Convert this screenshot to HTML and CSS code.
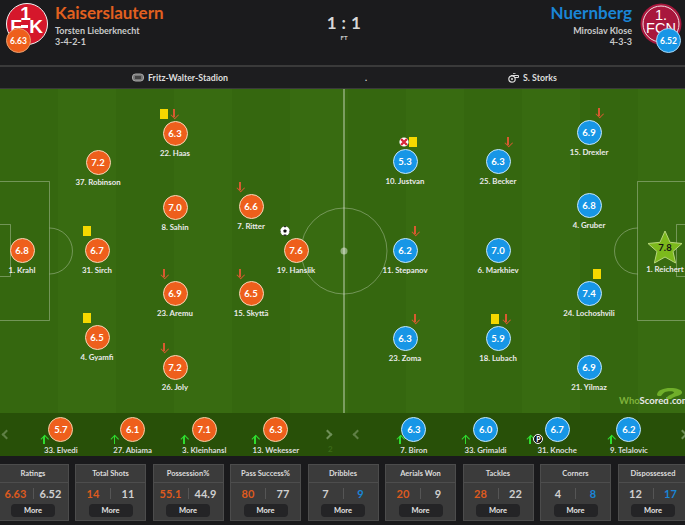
FILE: index.html
```html
<!DOCTYPE html>
<html lang="en">
<head>
<meta charset="utf-8">
<title>Kaiserslautern 1 : 1 Nuernberg</title>
<link rel="stylesheet" href="styles.css">
</head>
<body>
<div class="page">
  <header class="match">
    <div class="team home">
      <div class="crest">
        <svg viewBox="0 0 42 42" width="42" height="42"><circle cx="21" cy="21" r="20.5" fill="#d5172b" stroke="#f3f3f3" stroke-width="1"/><text x="19.5" y="17" class="crest-t big">1</text><text x="10" y="30" class="crest-t big">F</text><text x="30" y="30" class="crest-t big">K</text><rect x="15" y="22" width="7" height="3" fill="#fff"/></svg>
        <span class="team-rating home-bg">6.63</span>
      </div>
      <div class="team-info">
        <div class="team-name home-c">Kaiserslautern</div>
        <div class="team-sub">Torsten Lieberknecht</div>
        <div class="team-sub">3-4-2-1</div>
      </div>
    </div>
    <div class="score"><div class="score-val">1 : 1</div><div class="score-st">FT</div></div>
    <div class="team away">
      <div class="team-info">
        <div class="team-name away-c">Nuernberg</div>
        <div class="team-sub">Miroslav Klose</div>
        <div class="team-sub">4-3-3</div>
      </div>
      <div class="crest">
        <svg viewBox="0 0 42 42" width="42" height="42"><circle cx="21" cy="21" r="20.5" fill="#a8173d"/><circle cx="21" cy="21" r="18" fill="none" stroke="#f1dfe2" stroke-width="1"/><text x="21" y="16.5" class="crest-t mid">1.</text><text x="21" y="30" class="crest-t mid">FCN</text></svg>
        <span class="team-rating away-bg">6.52</span>
      </div>
    </div>
  </header>

  <div class="infobar">
    <div class="info venue">
      <svg width="12" height="9" viewBox="0 0 12 9"><rect x="0.5" y="1" width="11" height="7" rx="3" fill="#777" stroke="#aaa"/><rect x="3" y="3" width="6" height="3" fill="#444"/></svg>
      <span>Fritz-Walter-Stadion</span>
    </div>
    <div class="info dot">.</div>
    <div class="info referee">
      <svg width="11" height="11" viewBox="0 0 11 11"><circle cx="4" cy="7" r="3.2" fill="none" stroke="#ddd" stroke-width="1.2"/><circle cx="4" cy="7" r="1" fill="#ddd"/><path d="M3 3.5H10.5V5.5H6.5" fill="none" stroke="#ddd"/><path d="M5 1.5H7.5" stroke="#aaa"/></svg>
      <span>S. Storks</span>
    </div>
  </div>

  <main class="pitch">
    <svg class="lines" width="685" height="324" viewBox="0 0 685 324">
      <g fill="none" stroke="#fff" stroke-opacity=".3" stroke-width="1">
        <path d="M0 92.5H49.5V231.5H0"/>
        <path d="M0 135.5H10.5V187.5H0"/>
        <path d="M49.5 139A23 23 0 0 1 49.5 185"/>
        <path d="M685 92.5H637.5V231.5H685"/>
        <path d="M685 135.5H676.5V187.5H685"/>
        <path d="M637.5 139A23 23 0 0 0 637.5 185"/>
        <circle cx="344" cy="162" r="43"/>
      </g>
      <path d="M344 0V324" stroke="#fff" stroke-opacity=".45" stroke-width="1.5"/>
      <circle cx="344" cy="162" r="3.5" fill="#fff" fill-opacity=".45"/>
    </svg>

    <div class="player p1"><span class="rate home-bg">6.8</span><span class="pname">1. Krahl</span></div>
    <div class="player p2"><i class="card"></i><span class="rate home-bg">6.7</span><span class="pname">31. Sirch</span></div>
    <div class="player p3"><span class="rate home-bg">7.2</span><span class="pname">37. Robinson</span></div>
    <div class="player p4"><i class="card"></i><span class="rate home-bg">6.5</span><span class="pname">4. Gyamfi</span></div>
    <div class="player p5"><i class="card card-haas"></i><i class="down down-haas"></i><span class="rate home-bg">6.3</span><span class="pname">22. Haas</span></div>
    <div class="player p6"><span class="rate home-bg">7.0</span><span class="pname">8. Sahin</span></div>
    <div class="player p7"><i class="down down-h"></i><span class="rate home-bg">6.9</span><span class="pname">23. Aremu</span></div>
    <div class="player p8"><i class="down down-h"></i><span class="rate home-bg">7.2</span><span class="pname">26. Joly</span></div>
    <div class="player p9"><i class="down down-h"></i><span class="rate home-bg">6.6</span><span class="pname">7. Ritter</span></div>
    <div class="player p10"><i class="down down-h"></i><span class="rate home-bg">6.5</span><span class="pname">15. Skyttä</span></div>
    <div class="player p11">
      <svg class="ball" width="10" height="10" viewBox="0 0 10 10"><circle cx="5" cy="5" r="4.7" fill="#fff"/><path d="M5 3.2L6.8 4.5L6.1 6.6H3.9L3.2 4.5Z" fill="#111"/><path d="M3.2 .6L5 1.4L6.8 .6L5 0ZM.2 4L1.2 6.5L.4 6ZM9.8 4L8.8 6.5L9.6 6ZM3 9.3L4 8.4H6L7 9.3L5 10Z" fill="#111"/></svg>
      <span class="rate home-bg">7.6</span><span class="pname">19. Hanslik</span>
    </div>

    <div class="player q1"><svg class="miss" width="10" height="10" viewBox="0 0 10 10"><circle cx="5" cy="5" r="4.6" fill="#fff"/><path d="M2 2L8 8M8 2L2 8" stroke="#d8283a" stroke-width="2.4"/></svg><i class="card card-r"></i><span class="rate away-bg">5.3</span><span class="pname">10. Justvan</span></div>
    <div class="player q2"><i class="down down-a"></i><span class="rate away-bg">6.3</span><span class="pname">25. Becker</span></div>
    <div class="player q3"><i class="down down-a"></i><span class="rate away-bg">6.9</span><span class="pname">15. Drexler</span></div>
    <div class="player q4"><span class="rate away-bg">6.8</span><span class="pname">4. Gruber</span></div>
    <div class="player q5"><i class="down down-a"></i><span class="rate away-bg">6.2</span><span class="pname">11. Stepanov</span></div>
    <div class="player q6"><span class="rate away-bg">7.0</span><span class="pname">6. Markhiev</span></div>
    <div class="player q7"><i class="card card-r"></i><span class="rate away-bg">7.4</span><span class="pname">24. Lochoshvili</span></div>
    <div class="player q8"><i class="down down-a"></i><span class="rate away-bg">6.3</span><span class="pname">23. Zoma</span></div>
    <div class="player q9"><i class="card card-lub"></i><i class="down down-lub"></i><span class="rate away-bg">5.9</span><span class="pname">18. Lubach</span></div>
    <div class="player q10"><span class="rate away-bg">6.9</span><span class="pname">21. Yilmaz</span></div>
    <div class="player q11">
      <span class="star-wrap">
        <svg width="36" height="34" viewBox="0 0 36 34"><path d="M18 1L23 12.3L35 13.5L26 21.5L28.6 33L18 27L7.4 33L10 21.5L1 13.5L13 12.3Z" fill="#7cb91c" stroke="#b6d67a" stroke-width="1"/></svg>
        <span class="star-val">7.8</span>
      </span>
      <span class="pname">1. Reichert</span>
    </div>

    <div class="logo">
      <svg class="logo-q" width="27" height="11" viewBox="0 0 27 11"><path d="M1 7C1 2 8 0 14 0C21 0 27 2 26 5C25 8 18 8 15 11L10 11C11 7 18 6 18 4.5C18 3 12 3 9 4C7 5 6 7 5 8C3 8 1 8 1 7Z" fill="#6fae2a"/></svg>
      <span class="logo-a">Who</span><span class="logo-b">Scored</span><span class="logo-c">.com</span>
    </div>
  </main>

  <section class="subs">
    <div class="sub-half sub-left">
      <span class="chev chev-off chev-l"></span>
      <div class="sub"><i class="up s1"></i><span class="rate home-bg">5.7</span><span class="pname">33. Elvedi</span></div>
      <div class="sub"><i class="up s2"></i><span class="rate home-bg">6.1</span><span class="pname">27. Abiama</span></div>
      <div class="sub"><i class="up s3"></i><span class="rate home-bg">7.1</span><span class="pname">3. Kleinhansl</span></div>
      <div class="sub"><i class="up s4"></i><span class="rate home-bg">6.3</span><span class="pname">13. Wekesser</span></div>
      <span class="chev chev-on chev-r"></span>
      <span class="chev-n">2</span>
    </div>
    <div class="sub-half sub-right">
      <span class="chev chev-off chev-l"></span>
      <div class="sub"><i class="up s5"></i><span class="rate away-bg">6.3</span><span class="pname">7. Biron</span></div>
      <div class="sub"><i class="up s6"></i><span class="rate away-bg">6.0</span><span class="pname">33. Grimaldi</span></div>
      <div class="sub"><i class="up s7"></i><span class="pen">P</span><span class="rate away-bg">6.7</span><span class="pname">31. Knoche</span></div>
      <div class="sub"><i class="up s8"></i><span class="rate away-bg">6.2</span><span class="pname">9. Telalovic</span></div>
      <span class="chev chev-on chev-r"></span>
    </div>
  </section>

  <section class="stats">
    <div class="stat"><div class="stat-h">Ratings</div><div class="stat-v"><span class="home-c">6.63</span><i></i><span>6.52</span></div><div class="more">More</div></div>
    <div class="stat"><div class="stat-h">Total Shots</div><div class="stat-v"><span class="home-c">14</span><i></i><span>11</span></div><div class="more">More</div></div>
    <div class="stat"><div class="stat-h">Possession%</div><div class="stat-v"><span class="home-c">55.1</span><i></i><span>44.9</span></div><div class="more">More</div></div>
    <div class="stat"><div class="stat-h">Pass Success%</div><div class="stat-v"><span class="home-c">80</span><i></i><span>77</span></div><div class="more">More</div></div>
    <div class="stat"><div class="stat-h">Dribbles</div><div class="stat-v"><span>7</span><i></i><span class="away-c">9</span></div><div class="more">More</div></div>
    <div class="stat"><div class="stat-h">Aerials Won</div><div class="stat-v"><span class="home-c">20</span><i></i><span>9</span></div><div class="more">More</div></div>
    <div class="stat"><div class="stat-h">Tackles</div><div class="stat-v"><span class="home-c">28</span><i></i><span>22</span></div><div class="more">More</div></div>
    <div class="stat"><div class="stat-h">Corners</div><div class="stat-v"><span>4</span><i></i><span class="away-c">8</span></div><div class="more">More</div></div>
    <div class="stat"><div class="stat-h">Dispossessed</div><div class="stat-v"><span>12</span><i></i><span class="away-c">17</span></div><div class="more">More</div></div>
  </section>
</div>
</body>
</html>
```
FILE: styles.css
```css
* { box-sizing: border-box; }
html, body { margin: 0; padding: 0; }
body { background: #1c1c1e; font-family: Lato, "Open Sans", sans-serif; color: #ddd; }
.page { width: 685px; height: 525px; overflow: hidden; display: flex; flex-direction: column; }

.home-c { color: #e2601f; }
.away-c { color: #1a85d6; }
.home-bg { background: #ee5f1c; }
.away-bg { background: #1796e6; }

/* header */
.match { height: 67px; display: grid; grid-template-columns: 304px 80px 301px; background: #1b1b1d; border-bottom: 2px solid #3a3a3a; }
.team { display: flex; gap: 7px; padding-top: 3px; }
.home { padding-left: 6px; }
.away { justify-content: flex-end; padding-right: 3px; gap: 8px; }
.crest { position: relative; width: 42px; height: 42px; }
.crest svg { display: block; }
.crest-t { fill: #fff; font-family: "Liberation Sans", sans-serif; font-weight: 700; text-anchor: middle; }
.crest-t.big { font-size: 19px; }
.crest-t.mid { font-size: 14.5px; font-weight: 400; }
.team-rating { position: absolute; width: 25px; height: 25px; border-radius: 50%; display: flex; align-items: center; justify-content: center; color: #fff; font-size: 8.5px; font-weight: 700; }
.home .team-rating { left: 0; top: 25px; border: 1px solid #e8a070; }
.away .team-rating { left: 16px; top: 25px; border: 1px solid #a6d6f4; }
.team-info { display: flex; flex-direction: column; padding-top: 1px; }
.away .team-info { text-align: right; }
.team-name { font-size: 17px; font-weight: 700; line-height: 18px; height: 21px; }
.team-sub { font-size: 9px; line-height: 11px; color: #c9c9c9; font-weight: 700; }
.score { text-align: center; padding-top: 13px; }
.score-val { font-size: 17px; line-height: 20px; color: #d8d8d8; letter-spacing: .4px; font-weight: 700; }
.score-st { font-size: 6px; line-height: 8px; color: #ccc; margin-top: 1px; font-weight: 700; }

/* info bar */
.infobar { height: 22px; background: #1d1d1f; border-bottom: 1px solid #3a3a3a; display: grid; grid-template-columns: 330px 70px 285px; align-items: center; font-size: 8.8px; font-weight: 700; color: #ddd; }
.info { display: flex; align-items: center; gap: 4px; }
.venue { padding-left: 132px; }
.dot { padding-left: 35px; }
.referee { padding-left: 108px; }

/* pitch */
.pitch { position: relative; height: 324px; background: repeating-linear-gradient(90deg, #35670f 0, #35670f 58px, #386b11 58px, #386b11 116px); }
.lines { position: absolute; left: 0; top: 0; }
.player { position: absolute; width: 80px; margin-left: -40px; display: flex; flex-direction: column; align-items: center; }
.rate { width: 25px; height: 25px; border-radius: 50%; border: 1px solid #f4d9b8; display: flex; align-items: center; justify-content: center; color: #fff; font-size: 9.5px; font-weight: 700; flex: none; }
.away-bg.rate { border-color: #c5e6fa; }
.pname { font-size: 7.8px; font-weight: 700; line-height: 10px; margin-top: 2px; color: #eaeaea; white-space: nowrap; }

.card { position: absolute; width: 8px; height: 10px; background: #f5d800; left: 26px; top: -12px; }
.card-haas { left: 25px; top: -12px; }
.card-r { left: 44px; }
.card-lub { left: 33px; }
.down { position: absolute; top: -12px; width: 1.5px; height: 8px; background: #d85a30; }
.down::after { content: ""; position: absolute; left: -1.5px; bottom: 0; width: 4.5px; height: 4.5px; border-right: 1.5px solid #d85a30; border-bottom: 1.5px solid #d85a30; transform: rotate(45deg); }
.down-h { left: 28px; }
.down-a { left: 49px; }
.down-haas { left: 38px; }
.down-lub { left: 47px; }
.p1 { left: 22px; top: 149px; }
.p2 { left: 97px; top: 149px; }
.p3 { left: 98px; top: 61px; }
.p4 { left: 97px; top: 236px; }
.p5 { left: 175px; top: 32px; }
.p6 { left: 175px; top: 106px; }
.p7 { left: 175px; top: 192px; }
.p8 { left: 175px; top: 266px; }
.p9 { left: 251px; top: 105px; }
.p10 { left: 251px; top: 192px; }
.p11 { left: 296px; top: 149px; }
.q1 { left: 405px; top: 60px; }
.q2 { left: 498px; top: 60px; }
.q3 { left: 589px; top: 31px; }
.q4 { left: 589px; top: 104px; }
.q5 { left: 405px; top: 149px; }
.q6 { left: 498px; top: 149px; }
.q7 { left: 589px; top: 192px; }
.q8 { left: 405px; top: 237px; }
.q9 { left: 498px; top: 237px; }
.q10 { left: 589px; top: 266px; }
.q11 { left: 665px; top: 141px; }
.ball { position: absolute; left: 24px; top: -12px; }
.miss { position: absolute; left: 34px; top: -12px; }
.star-wrap { position: relative; width: 36px; height: 34px; display: block; }
.star-val { position: absolute; left: 0; right: 0; top: 12px; text-align: center; font-size: 9.5px; font-weight: 700; color: #111; line-height: 12px; }
.q11 .pname { margin-top: 0; }

.logo { position: absolute; left: 619px; top: 306px; width: 80px; font-size: 9.5px; font-weight: 700; line-height: 12px; white-space: nowrap; }
.logo-q { position: absolute; left: 37px; top: -7px; }
.logo-a { color: #7fb23c; }
.logo-b { color: #e8e8e8; }
.logo-c { color: #e8e8e8; margin-left: 1px; }

/* substitutes */
.subs { height: 43px; display: flex; background: #285008; }
.sub-half { display: flex; align-items: flex-start; position: relative; }
.sub-left { width: 345px; padding-left: 25px; }
.sub-right { width: 340px; padding-left: 33px; }
.sub { width: 71.7px; display: flex; flex-direction: column; align-items: center; position: relative; padding-top: 4px; }
.sub .pname { margin-top: 2.5px; color: #dedede; }
.sub .rate { border-color: #f0d0a8; }
.sub .away-bg.rate { border-color: #c5e6fa; }
.up { position: absolute; top: 23px; width: 1.5px; height: 8px; background: #2fdc2f; }
.up::after { content: ""; position: absolute; left: -1.5px; top: 0; width: 4.5px; height: 4.5px; border-left: 1.5px solid #2fdc2f; border-top: 1.5px solid #2fdc2f; transform: rotate(45deg); }
.s1 { left: 18px; }
.s2 { left: 17px; }
.s3 { left: 15px; }
.s4 { left: 14px; }
.s5 { left: 21px; }
.s6 { left: 15px; }
.s7 { left: 8px; }
.s8 { left: 17px; }
.pen { position: absolute; left: 12px; top: 21px; width: 10px; height: 10px; border-radius: 50%; background: #111; border: 1px solid #fff; color: #fff; font-size: 7px; font-weight: 900; line-height: 8px; text-align: center; z-index: 1; }
.chev { position: absolute; top: 18px; width: 7px; height: 7px; }
.chev-l { border-left: 2px solid #5f7f45; border-bottom: 2px solid #5f7f45; transform: rotate(45deg); }
.chev-r { border-right: 2px solid #6f8f58; border-top: 2px solid #6f8f58; transform: rotate(45deg); }
.sub-left .chev-l { left: 3px; }
.sub-left .chev-r { left: 324px; }
.sub-right .chev-l { left: 9px; }
.sub-right .chev-r { left: 334px; }
.chev-n { position: absolute; left: 328px; top: 31px; font-size: 8px; line-height: 10px; font-weight: 700; color: #3c6a18; }

/* stats */
.stats { flex: 1; display: flex; gap: 6.5px; padding: 8px 0 0; margin-left: -2.5px; background: #1a1a1c; align-items: flex-start; }
.stat { width: 71px; flex: none; height: 57px; background: #3b3b3b; border: 1px solid #4c4c4c; display: flex; flex-direction: column; align-items: center; }
.stat-h { width: 100%; height: 18px; border-bottom: 1px solid #4d4d4d; font-size: 7.5px; font-weight: 700; line-height: 17px; text-align: center; color: #dcdcdc; }
.stat-v { width: 100%; height: 21px; display: grid; grid-template-columns: 1fr 1px 1fr; align-items: center; font-size: 11px; font-weight: 700; text-align: center; color: #d0d0d0; }
.stat-v i { display: block; height: 11px; background: #555; }
.stat-v .home-c { color: #dd5a1e; }
.stat-v .away-c { color: #1a85d6; }
.more { width: 44px; height: 13px; border-radius: 4px; background: #242426; font-size: 7.5px; font-weight: 700; line-height: 13px; text-align: center; color: #e4e4e4; }
```
